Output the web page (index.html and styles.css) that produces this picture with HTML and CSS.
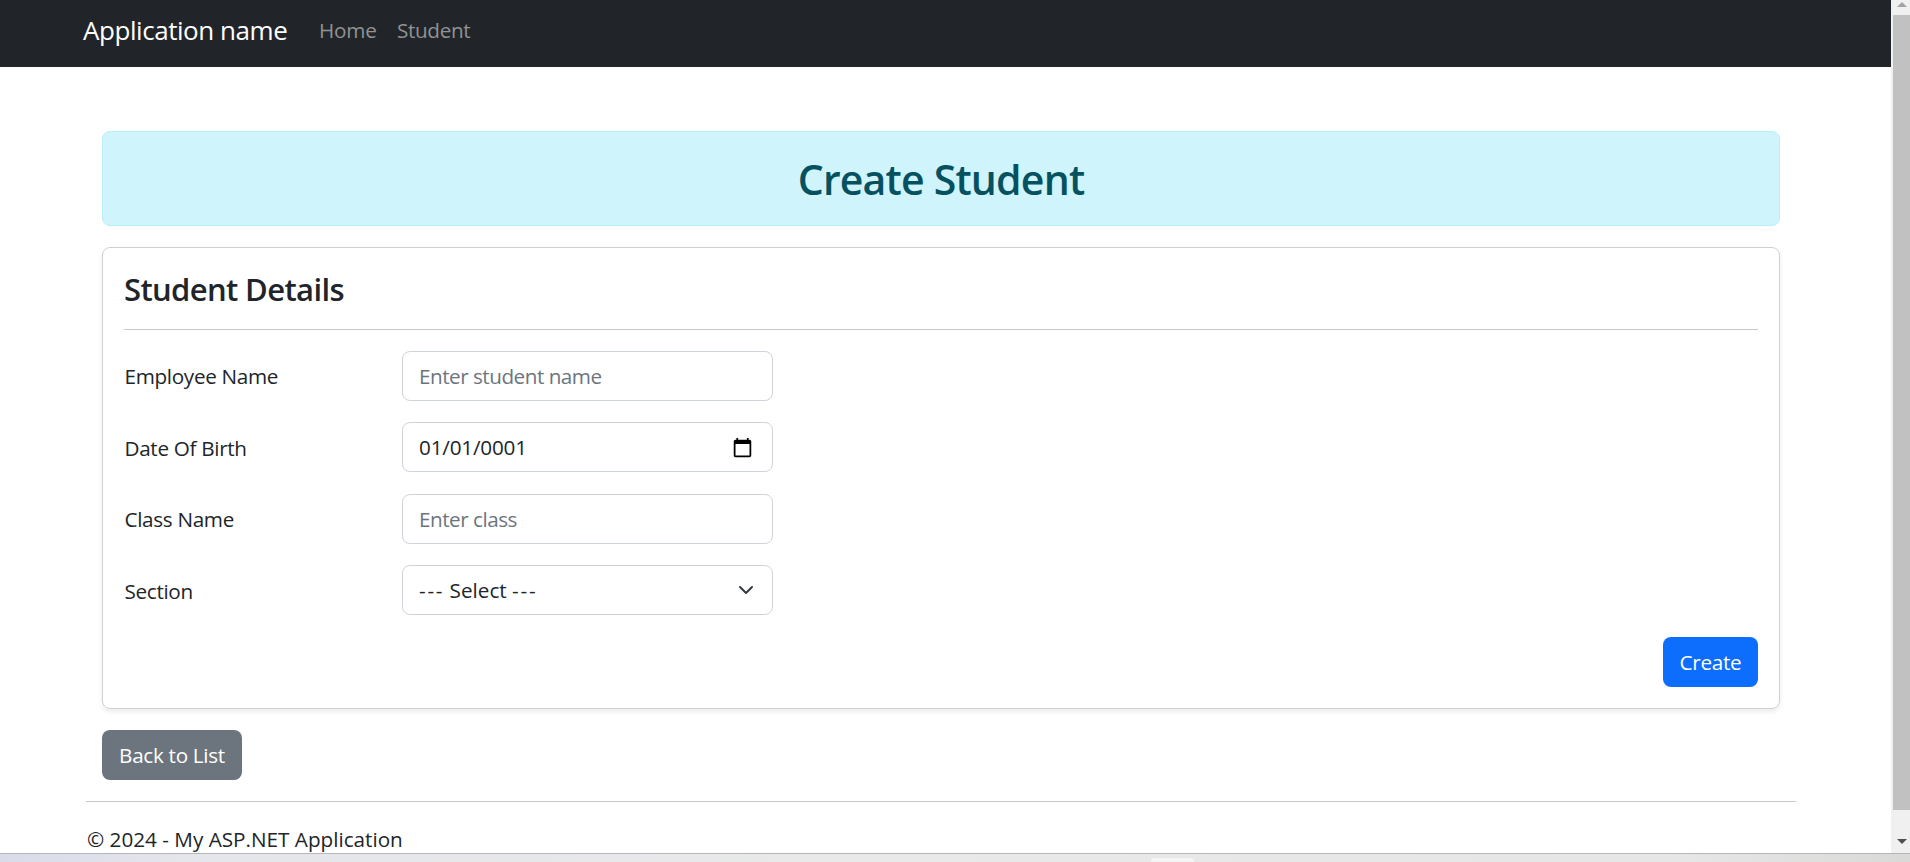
FILE: index.html
```html
<!DOCTYPE html>
<html lang="en">
<head>
<meta charset="utf-8">
<title>Create Student - My ASP.NET Application</title>
<link rel="stylesheet" href="styles.css">
</head>
<body>
<div class="window">
  <div class="page">
    <nav class="navbar">
      <a class="brand">Application name</a>
      <a class="nav-link">Home</a>
      <a class="nav-link student">Student</a>
    </nav>
    <main class="content">
      <h1 class="alert">Create Student</h1>
      <form class="card">
        <h2 class="card-title">Student Details</h2>
        <div class="row">
          <label class="label" for="name">Employee Name</label>
          <input class="control name" id="name" placeholder="Enter student name">
        </div>
        <div class="row">
          <label class="label low">Date Of Birth</label>
          <div class="control date"><span>01/01/0001</span>
            <svg class="calendar" viewBox="0 0 24 24"><path d="M20 3h-1V1h-2v2H7V1H5v2H4c-1.1 0-2 .9-2 2v16c0 1.1.9 2 2 2h16c1.1 0 2-.9 2-2V5c0-1.1-.9-2-2-2zm0 18H4V8h16v13z"/></svg>
          </div>
        </div>
        <div class="row">
          <label class="label" for="class">Class Name</label>
          <input class="control class" id="class" placeholder="Enter class">
        </div>
        <div class="row">
          <label class="label low">Section</label>
          <div class="control select"><span><span class="dash">---</span> Select <span class="dash">---</span></span>
            <svg class="chevron" viewBox="0 0 16 16"><path d="m2 5 6 6 6-6"/></svg>
          </div>
        </div>
        <div class="actions"><button class="btn primary" type="button">Create</button></div>
      </form>
      <a class="btn secondary">Back to List</a>
    </main>
    <footer class="footer">© 2024 - My ASP.NET Application</footer>
  </div>
  <div class="scrollbar">
    <svg class="arrow up" viewBox="0 0 10 5"><path d="M5 0 10 5H0z"/></svg>
    <div class="thumb"></div>
    <svg class="arrow down" viewBox="0 0 10 5"><path d="M0 0H10L5 5z"/></svg>
  </div>
</div>
<div class="taskbar"><div class="task"></div></div>
</body>
</html>
```
FILE: styles.css
```css
* { box-sizing: border-box; }
body {
  margin: 0;
  height: 862px;
  overflow: hidden;
  background: #fff;
  color: #212529;
  font: 20.7px/32px "Open Sans", "Noto Sans", sans-serif;
}
.window { display: flex; height: 853px; }
.page { flex: 1; }
.navbar {
  display: flex;
  align-items: center;
  height: 67px;
  padding: 0 0 7px 83px;
  background: #212529;
}
.brand { width: 236px; color: #fff; font-size: 26px; letter-spacing: -.45px; }
.nav-link { width: 78px; color: #909294; letter-spacing: -.2px; }
.student { letter-spacing: -.35px; }
.content { padding: 64px 111px 0 102px; }
.alert {
  height: 95px;
  margin: 0 0 21px;
  border: 1px solid #b6effb;
  border-radius: 8px;
  background: #cff4fc;
  color: #055160;
  font-size: 41px;
  font-weight: 600;
  line-height: 94px;
  letter-spacing: -.8px;
  text-align: center;
}
.card {
  height: 462px;
  margin-bottom: 21px;
  padding: 22px 21px 0;
  border: 1px solid #cfd0d1;
  border-radius: 8px;
  box-shadow: 0 3px 5px rgba(0, 0, 0, .075);
}
.card-title {
  height: 60px;
  margin: 0 0 21px;
  border-bottom: 1px solid #c8c9ca;
  font-size: 31px;
  font-weight: 600;
  line-height: 38px;
  letter-spacing: -.63px;
}
.row { display: flex; height: 50px; margin-bottom: 21.4px; }
.label { width: 278px; padding-left: .5px; line-height: 50px; letter-spacing: -.32px; }
.low { line-height: 52px; }
.control {
  display: flex;
  align-items: center;
  justify-content: space-between;
  width: 371px;
  height: 50px;
  padding: 0 15px 0 16px;
  border: 1px solid #ced4da;
  border-radius: 8px;
  background: #fff;
  color: #212529;
  font: inherit;
}
.control::placeholder { color: #6c757d; opacity: 1; }
.name { letter-spacing: -.5px; }
.class { letter-spacing: -.5px; }
.date { letter-spacing: -.2px; }
.dash { letter-spacing: 1.75px; }
.calendar { width: 21px; height: 21px; margin-right: 4px; fill: #000; }
.chevron {
  width: 16px;
  height: 16px;
  margin-right: 3px;
  fill: none;
  stroke: #343a40;
  stroke-width: 2;
  stroke-linecap: round;
  stroke-linejoin: round;
}
.actions { display: flex; justify-content: flex-end; padding-top: .4px; }
.btn {
  display: flex;
  align-items: center;
  justify-content: center;
  height: 50px;
  padding: 0;
  border: 0;
  border-radius: 8px;
  color: #fff;
  font: inherit;
  letter-spacing: -.3px;
}
.primary { width: 95px; background: #0d6efd; }
.secondary { width: 140px; background: #6c757d; }
.footer {
  margin: 21px 95px 0 86px;
  padding: 21px 0 0 1px;
  border-top: 1px solid #c8c9ca;
  line-height: 32px;
}
.scrollbar {
  display: flex;
  flex-direction: column;
  width: 19px;
  padding: 2px 0 9px 2px;
  background: #f0f0f0;
}
.arrow { width: 10px; height: 5px; margin-left: 4px; flex: none; }
.up { fill: #a3a3a3; }
.down { fill: #505050; }
.thumb { height: 795px; margin: 8px 0 29px; background: #c1c1c1; }
.taskbar {
  display: flex;
  align-items: flex-end;
  height: 9px;
  padding-left: 1151px;
  border-top: 1px solid #b4b6b9;
  background: linear-gradient(90deg, #d9dbe9 0, #e5e6eb 10%, #e9e9e9 45%, #e6e6e6 88%, #d9dad8);
}
.task { width: 43px; height: 4px; border-radius: 4px 4px 0 0; background: #f5f5f5; }
```
